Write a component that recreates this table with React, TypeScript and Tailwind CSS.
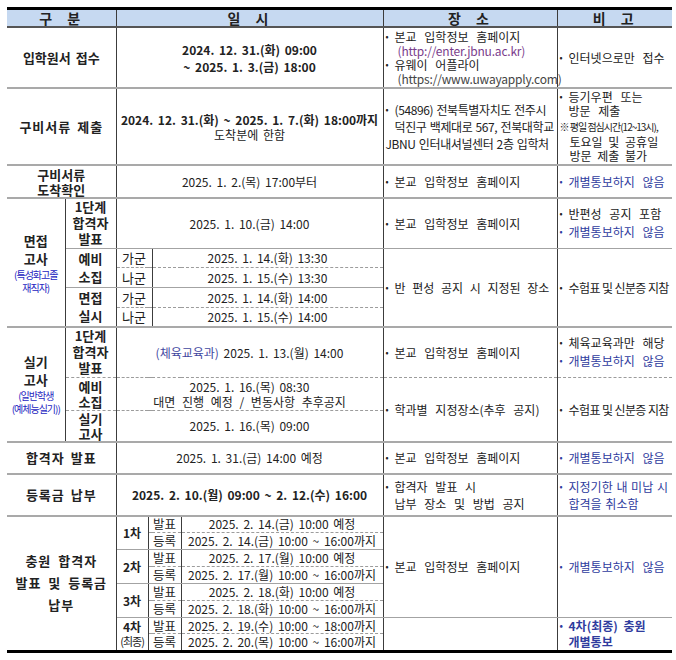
import React from 'react';

const FONT = "font-['Noto_Sans_CJK_KR','Noto_Sans',sans-serif]";
const MAJ = 'border-b-2 border-b-[#a9a9a9]';
const SOL = 'border-b border-b-[#a3a3a3]';
const DSH = '[border-bottom:1px_dashed_#9c9c9c]';
const LBL = 'font-bold text-[13px]';
const BLUE = 'text-[#2f3c9e]';
const TXT = 'text-left pl-[2px] [word-spacing:5px]';

type TdProps = React.TdHTMLAttributes<HTMLTableCellElement> & { e?: 'l' | 'r'; b?: string };

function Td({ e, b = '', className = '', children, ...rest }: TdProps) {
  const side =
    e === 'l'
      ? 'border-r border-r-[#3c3c3c]'
      : e === 'r'
        ? 'border-l border-l-[#3c3c3c]'
        : 'border-x border-x-[#3c3c3c]';
  return (
    <td className={`${side} ${b} p-0 align-middle text-center ${className}`} {...rest}>
      {children}
    </td>
  );
}

function Bullet({ children, className = '' }: { children: React.ReactNode; className?: string }) {
  return (
    <div className={`flex ${className}`}>
      <span className="w-[9px] shrink-0 text-[9px]">•</span>
      <span>{children}</span>
    </div>
  );
}

const rounds = [
  { n: '1차', d: '14.(금)', last: '10:00 ~ 16:00까지' },
  { n: '2차', d: '17.(월)', last: '10:00 ~ 16:00까지' },
  { n: '3차', d: '18.(화)', last: '10:00 ~ 16:00까지' },
];

export default function App() {
  return (
    <div className={`${FONT} bg-white w-[676px] h-[660px] text-[#222] text-[12px] leading-[15px] [word-spacing:2px]`}>
      <table className="ml-[7px] mt-[7px] w-[665px] table-fixed border-collapse border-t-[3px] border-t-black border-b-[3px] border-b-black">
        <colgroup>
          <col className="w-[58px]" />
          <col className="w-[51px]" />
          <col className="w-[32px]" />
          <col className="w-[4px]" />
          <col className="w-[29px]" />
          <col className="w-[202px]" />
          <col className="w-[174px]" />
          <col className="w-[115px]" />
        </colgroup>
        <tbody>
          {/* header */}
          <tr className="h-[17px] bg-[#c6d9f1] text-[14px] font-bold leading-[16px] tracking-[3px] [word-spacing:6px]">
            <Td e="l" colSpan={2} b="border-b-2 border-b-[#555]">구 분</Td>
            <Td colSpan={4} b="border-b-2 border-b-[#555]">일 시</Td>
            <Td b="border-b-2 border-b-[#555]">장 소</Td>
            <Td e="r" b="border-b-2 border-b-[#555]">비 고</Td>
          </tr>

          {/* 입학원서 접수 */}
          <tr className="h-[61px]">
            <Td e="l" colSpan={2} b={MAJ} className={LBL}>입학원서 접수</Td>
            <Td colSpan={4} b={MAJ} className="font-bold leading-[17px]">
              2024. 12. 31.(화) 09:00
              <br />~ 2025. 1. 3.(금) 18:00
            </Td>
            <Td b={MAJ} className={`${TXT} leading-[14px]`}>
              <Bullet>본교 입학정보 홈페이지</Bullet>
              <div className="pl-[12px] text-[#7a3d8c] tracking-[-0.2px]">(http://enter.jbnu.ac.kr)</div>
              <Bullet>유웨이 어플라이</Bullet>
              <div className="pl-[12px] text-[#444] tracking-[-0.2px]">(https://www.uwayapply.com)</div>
            </Td>
            <Td e="r" b={MAJ} className={TXT}>
              <Bullet>인터넷으로만 접수</Bullet>
            </Td>
          </tr>

          {/* 구비서류 제출 */}
          <tr className="h-[77px]">
            <Td e="l" colSpan={2} b={MAJ} className={`${LBL} tracking-[1px]`}>구비서류 제출</Td>
            <Td colSpan={4} b={MAJ} className="whitespace-nowrap">
              <span className="font-bold [word-spacing:2px]">2024. 12. 31.(화) ~ 2025. 1. 7.(화) 18:00까지</span>
              <br />도착분에 한함
            </Td>
            <Td b={MAJ} className="text-left pl-[2px] leading-[17px] whitespace-nowrap tracking-[-0.4px] [word-spacing:1px]">
              <Bullet>(54896) 전북특별자치도 전주시</Bullet>
              <div className="pl-[9px]">덕진구 백제대로 567, 전북대학교</div>
              <div>JBNU 인터내셔널센터 2층 입학처</div>
            </Td>
            <Td e="r" b={MAJ} className={`${TXT} leading-[14px] whitespace-nowrap`}>
              <Bullet>
                등기우편 또는
                <br />방문 제출
              </Bullet>
              <div className="text-[10px] leading-[13px] tracking-[-1px] [word-spacing:0px] py-[2px]">※ 평일 점심시간(12~13시),</div>
              <div className="pl-[10px] [word-spacing:3px]">
                토요일 및 공휴일
                <br />방문 제출 불가
              </div>
            </Td>
          </tr>

          {/* 구비서류 도착확인 */}
          <tr className="h-[33px]">
            <Td e="l" colSpan={2} b={MAJ} className={`${LBL} leading-[15px]`}>
              구비서류
              <br />도착확인
            </Td>
            <Td colSpan={4} b={MAJ}>2025. 1. 2.(목) 17:00부터</Td>
            <Td b={MAJ} className={TXT}>
              <Bullet>본교 입학정보 홈페이지</Bullet>
            </Td>
            <Td e="r" b={MAJ} className={TXT}>
              <Bullet className={BLUE}>개별통보하지 않음</Bullet>
            </Td>
          </tr>

          {/* 면접고사 */}
          <tr className="h-[50px]">
            <Td e="l" rowSpan={5} b={MAJ}>
              <div className={`${LBL} leading-[18px]`}>
                면접
                <br />고사
              </div>
              <div className="text-[10px] leading-[13px] text-[#2424c0] tracking-[-1px] [word-spacing:0px] whitespace-nowrap">
                (특성화고졸
                <br />재직자)
              </div>
            </Td>
            <Td b={SOL} className={`${LBL} leading-[16px]`}>
              1단계
              <br />합격자
              <br />발표
            </Td>
            <Td colSpan={4} b={SOL}>2025. 1. 10.(금) 14:00</Td>
            <Td b={SOL} className={TXT}>
              <Bullet>본교 입학정보 홈페이지</Bullet>
            </Td>
            <Td e="r" b={SOL} className={`${TXT} leading-[18px]`}>
              <Bullet>반편성 공지 포함</Bullet>
              <Bullet className={BLUE}>개별통보하지 않음</Bullet>
            </Td>
          </tr>
          <tr className="h-[19px]">
            <Td rowSpan={2} b={SOL} className={`${LBL} leading-[18px]`}>
              예비
              <br />소집
            </Td>
            <Td colSpan={2} b={DSH} className="text-[13px]">가군</Td>
            <Td colSpan={2} b={DSH}>2025. 1. 14.(화) 13:30</Td>
            <Td rowSpan={4} b={MAJ} className="text-left pl-[2px] [word-spacing:4px]">
              <Bullet>반 편성 공지 시 지정된 장소</Bullet>
            </Td>
            <Td e="r" rowSpan={4} b={MAJ} className="text-left pl-[2px] whitespace-nowrap tracking-[-0.6px] [word-spacing:0px]">
              <Bullet>수험표 및 신분증 지참</Bullet>
            </Td>
          </tr>
          <tr className="h-[20px]">
            <Td colSpan={2} b={SOL} className="text-[13px]">나군</Td>
            <Td colSpan={2} b={SOL}>2025. 1. 15.(수) 13:30</Td>
          </tr>
          <tr className="h-[20px]">
            <Td rowSpan={2} b={MAJ} className={`${LBL} leading-[18px]`}>
              면접
              <br />실시
            </Td>
            <Td colSpan={2} b={DSH} className="text-[13px]">가군</Td>
            <Td colSpan={2} b={DSH}>2025. 1. 14.(화) 14:00</Td>
          </tr>
          <tr className="h-[20px]">
            <Td colSpan={2} b={MAJ} className="text-[13px]">나군</Td>
            <Td colSpan={2} b={MAJ}>2025. 1. 15.(수) 14:00</Td>
          </tr>

          {/* 실기고사 */}
          <tr className="h-[50px]">
            <Td e="l" rowSpan={3} b={MAJ}>
              <div className={`${LBL} leading-[18px]`}>
                실기
                <br />고사
              </div>
              <div className="text-[10px] leading-[13px] text-[#2424c0] tracking-[-1px] [word-spacing:0px] whitespace-nowrap">
                (일반학생
                <br />(예체능실기))
              </div>
            </Td>
            <Td b={DSH} className={`${LBL} leading-[16px]`}>
              1단계
              <br />합격자
              <br />발표
            </Td>
            <Td colSpan={4} b={DSH}>
              <span className="text-[#3f48a0]">(체육교육과)</span> 2025. 1. 13.(월) 14:00
            </Td>
            <Td b={DSH} className={TXT}>
              <Bullet>본교 입학정보 홈페이지</Bullet>
            </Td>
            <Td e="r" b={DSH} className={`${TXT} leading-[18px]`}>
              <Bullet>체육교육과만 해당</Bullet>
              <Bullet className={BLUE}>개별통보하지 않음</Bullet>
            </Td>
          </tr>
          <tr className="h-[33px]">
            <Td b={DSH} className={`${LBL} leading-[15px]`}>
              예비
              <br />소집
            </Td>
            <Td colSpan={4} b={DSH} className="whitespace-nowrap">
              2025. 1. 16.(목) 08:30
              <br />
              <span className="[word-spacing:4px]">대면 진행 예정 / 변동사항 추후공지</span>
            </Td>
            <Td rowSpan={2} b={MAJ} className={TXT}>
              <Bullet>학과별 지정장소(추후 공지)</Bullet>
            </Td>
            <Td e="r" rowSpan={2} b={MAJ} className="text-left pl-[2px] whitespace-nowrap tracking-[-0.6px] [word-spacing:0px]">
              <Bullet>수험표 및 신분증 지참</Bullet>
            </Td>
          </tr>
          <tr className="h-[31px]">
            <Td b={MAJ} className={`${LBL} leading-[15px]`}>
              실기
              <br />고사
            </Td>
            <Td colSpan={4} b={MAJ}>2025. 1. 16.(목) 09:00</Td>
          </tr>

          {/* 합격자 발표 */}
          <tr className="h-[32px]">
            <Td e="l" colSpan={2} b={MAJ} className={`${LBL} tracking-[1px]`}>합격자 발표</Td>
            <Td colSpan={4} b={MAJ}>2025. 1. 31.(금) 14:00 예정</Td>
            <Td b={MAJ} className={TXT}>
              <Bullet>본교 입학정보 홈페이지</Bullet>
            </Td>
            <Td e="r" b={MAJ} className={TXT}>
              <Bullet className={BLUE}>개별통보하지 않음</Bullet>
            </Td>
          </tr>

          {/* 등록금 납부 */}
          <tr className="h-[42px]">
            <Td e="l" colSpan={2} b={MAJ} className={`${LBL} tracking-[1px]`}>등록금 납부</Td>
            <Td colSpan={4} b={MAJ} className="font-bold">2025. 2. 10.(월) 09:00 ~ 2. 12.(수) 16:00</Td>
            <Td b={MAJ} className={`${TXT} leading-[17px]`}>
              <Bullet>
                합격자 발표 시
                <br />납부 장소 및 방법 공지
              </Bullet>
            </Td>
            <Td e="r" b={MAJ} className={`text-left pl-[2px] whitespace-nowrap [word-spacing:1px] leading-[17px] ${BLUE}`}>
              <Bullet>
                지정기한 내 미납 시
                <br />합격을 취소함
              </Bullet>
            </Td>
          </tr>

          {/* 충원 합격자 */}
          {rounds.map((r, i) => (
            <React.Fragment key={r.n}>
              <tr className="h-[17px]">
                {i === 0 && (
                  <Td e="l" colSpan={2} rowSpan={8} className="font-bold text-[13px] leading-[22px] tracking-[1px] [word-spacing:3px]">
                    충원 합격자
                    <br />발표 및 등록금
                    <br />납부
                  </Td>
                )}
                <Td rowSpan={2} b={SOL} className="font-bold">{r.n}</Td>
                <Td colSpan={2} b={DSH} className="text-[12.5px] leading-[14px]">발표</Td>
                <Td b={DSH} className="leading-[14px]">2025. 2. {r.d} 10:00 예정</Td>
                {i === 0 && (
                  <>
                    <Td rowSpan={6} b={SOL} className={TXT}>
                      <Bullet>본교 입학정보 홈페이지</Bullet>
                    </Td>
                    <Td e="r" rowSpan={6} b={SOL} className={TXT}>
                      <Bullet className={BLUE}>개별통보하지 않음</Bullet>
                    </Td>
                  </>
                )}
              </tr>
              <tr className="h-[17px]">
                <Td colSpan={2} b={SOL} className="text-[12.5px] leading-[14px]">등록</Td>
                <Td b={SOL} className="leading-[14px] whitespace-nowrap">2025. 2. {r.d} {r.last}</Td>
              </tr>
            </React.Fragment>
          ))}
          <tr className="h-[16px]">
            <Td rowSpan={2} className="leading-[14px]">
              <span className="font-bold">4차</span>
              <br />
              <span className="text-[11px] tracking-[-1px]">(최종)</span>
            </Td>
            <Td colSpan={2} b={DSH} className="text-[12.5px] leading-[14px]">발표</Td>
            <Td b={DSH} className="leading-[14px] whitespace-nowrap">2025. 2. 19.(수) 10:00 ~ 18:00까지</Td>
            <Td rowSpan={2}></Td>
            <Td e="r" rowSpan={2} className={`text-left pl-[2px] whitespace-nowrap [word-spacing:3px] leading-[16px] font-bold ${BLUE}`}>
              <Bullet>
                4차(최종) 충원
                <br />개별통보
              </Bullet>
            </Td>
          </tr>
          <tr className="h-[17px]">
            <Td colSpan={2} className="text-[12.5px] leading-[14px]">등록</Td>
            <Td className="leading-[14px] whitespace-nowrap">2025. 2. 20.(목) 10:00 ~ 16:00까지</Td>
          </tr>
        </tbody>
      </table>
    </div>
  );
}
